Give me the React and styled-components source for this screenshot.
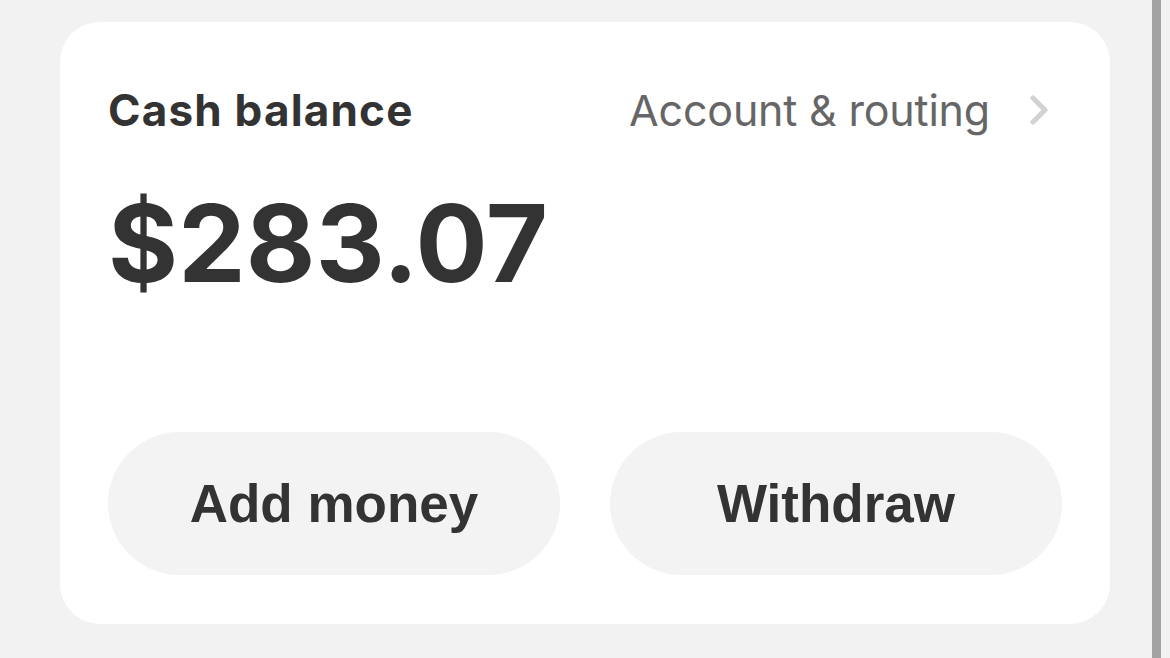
import React from 'react'
import styled, { createGlobalStyle } from 'styled-components'

const GlobalStyle = createGlobalStyle`
  html, body {
    margin: 0;
    padding: 0;
    background: #f2f2f2;
  }
  * {
    box-sizing: border-box;
  }
`;

const Page = styled.div`
  display: flex;
  height: 658px;
  padding-left: 60px;
  overflow: hidden;
  font-family: Inter, 'Liberation Sans', sans-serif;
`;

const Content = styled.div`
  width: 1050px;
  padding-top: 22px;
`;

const Scrollbar = styled.div`
  width: 9px;
  margin-left: 42px;
  height: 100%;
  background: #a3a3a3;
`;

const Card = styled.div`
  height: 602px;
  background: #ffffff;
  border-radius: 40px;
  padding: 0 48px 49px;
  display: flex;
  flex-direction: column;
`;

const Header = styled.div`
  display: flex;
  align-items: center;
  justify-content: space-between;
  height: 176px;
`;

const Title = styled.h2`
  margin: 0;
  font-size: 44px;
  font-weight: 700;
  color: #333333;
  letter-spacing: 1.2px;
`;

const RoutingLink = styled.a`
  display: flex;
  align-items: center;
  gap: 40px;
  font-size: 43px;
  font-weight: 400;
  color: #666666;
  letter-spacing: -0.2px;
  text-decoration: none;
  margin-right: 14px;
  svg {
    display: block;
  }
`;

const Amount = styled.div`
  font-size: 107px;
  font-weight: 700;
  color: #333333;
  letter-spacing: 0.2px;
  line-height: 1;
  margin-top: -8px;
`;

const Actions = styled.div`
  margin-top: auto;
  display: grid;
  grid-template-columns: 1fr 1fr;
  gap: 50px;
`;

const ActionButton = styled.button`
  height: 143px;
  border: none;
  border-radius: 72px;
  background: #f3f3f3;
  color: #333333;
  font-family: 'Liberation Sans', Arial, sans-serif;
  font-size: 53px;
  font-weight: 700;
  cursor: pointer;
`;

const Chevron = () => (
  <svg width="18" height="30" viewBox="0 0 18 30" fill="none">
    <path d="M3 3l12 12-12 12" stroke="#d2d2d2" strokeWidth="5" strokeLinecap="round" strokeLinejoin="round" />
  </svg>
);

export default function App() {
  return (
    <>
      <GlobalStyle />
      <Page>
        <Content>
          <Card>
            <Header>
              <Title>Cash balance</Title>
              <RoutingLink href="#">
                Account &amp; routing
                <Chevron />
              </RoutingLink>
            </Header>
            <Amount>$283.07</Amount>
            <Actions>
              <ActionButton>Add money</ActionButton>
              <ActionButton>Withdraw</ActionButton>
            </Actions>
          </Card>
        </Content>
        <Scrollbar />
      </Page>
    </>
  )
}
